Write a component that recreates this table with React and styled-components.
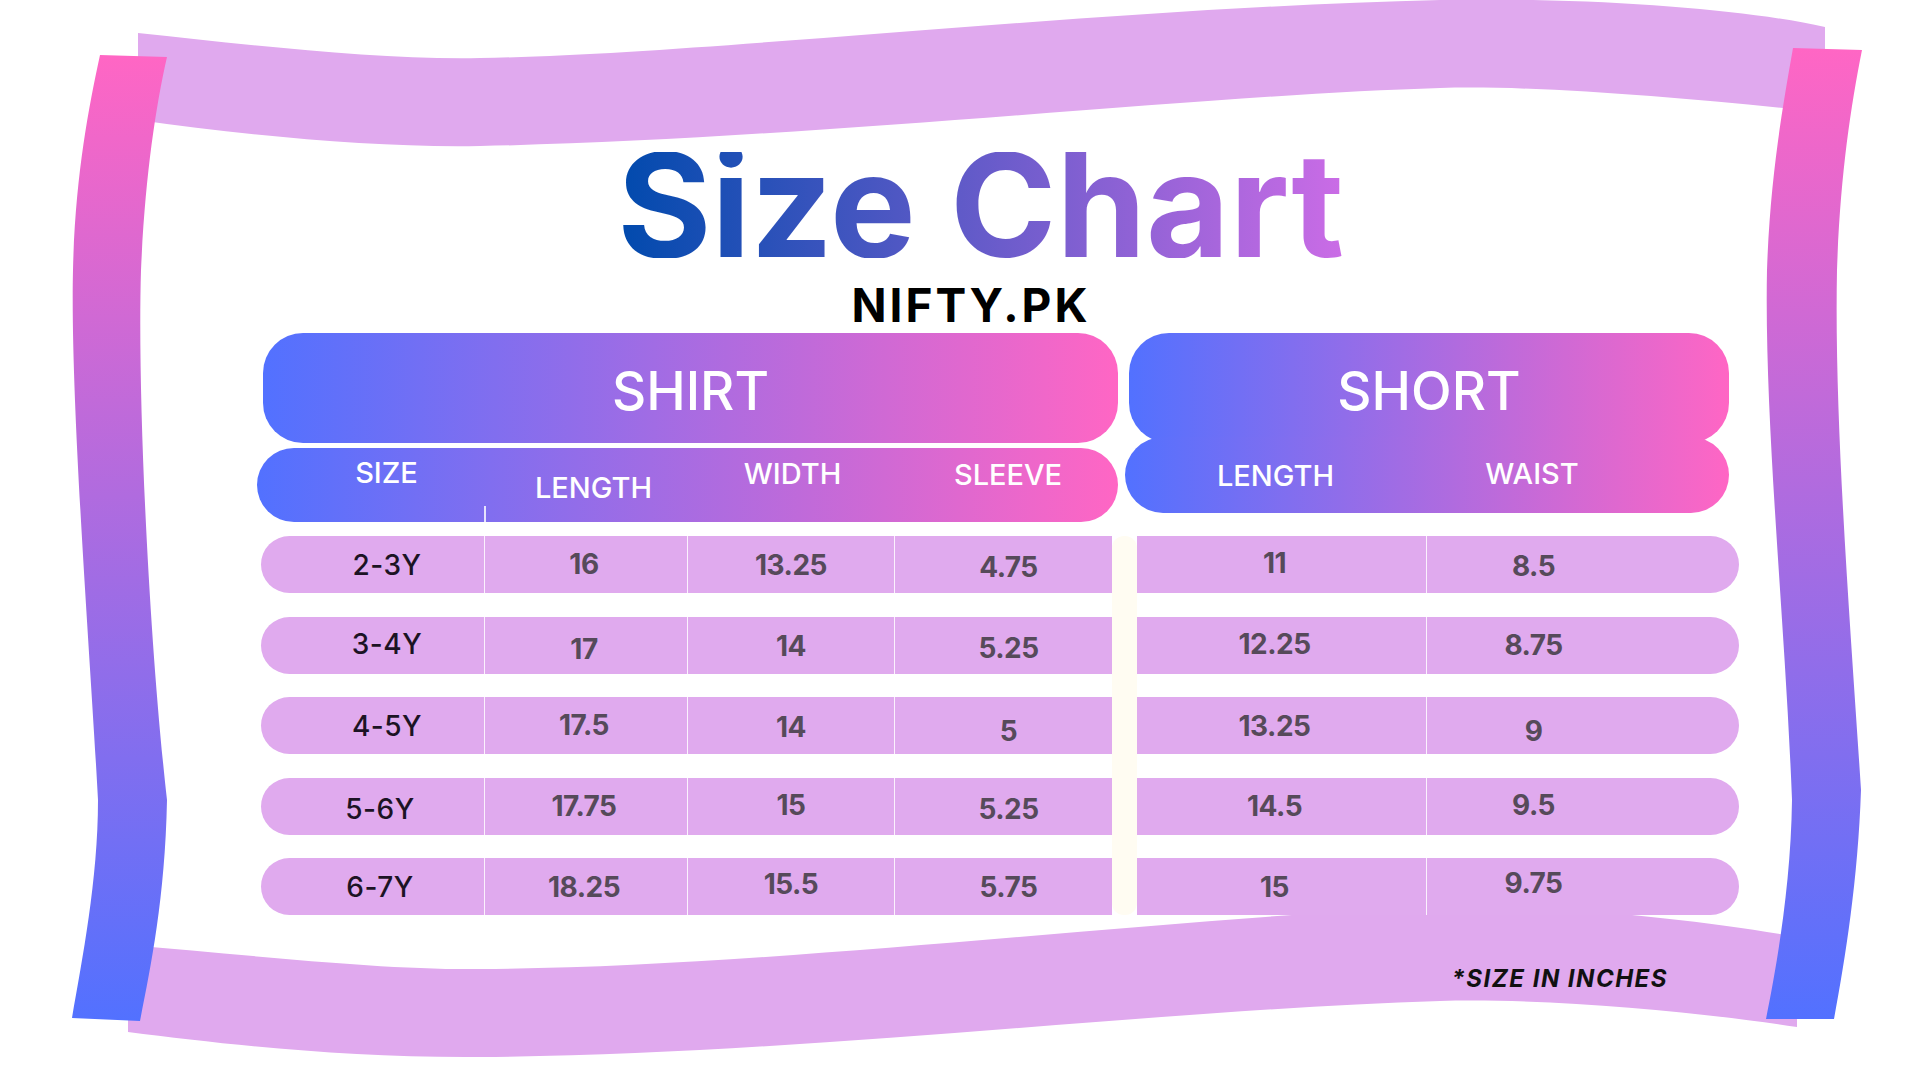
import React from "react"
import styled, { createGlobalStyle } from "styled-components"

const BLUE = "#5271ff"
const PINK = "#ff66c4"
const LILAC = "#e0a9ee"
const ROW = "#e0aaee"

const GlobalStyle = createGlobalStyle`
  html, body {
    margin: 0;
    padding: 0;
    background: #fff;
  }
  body {
    font-family: Inter, "Noto Sans", sans-serif;
  }
`

const c = (v, dy = 0, dx = 0) => ({ v, dy, dx })

const shirtRows = [
  [c("2-3Y"), c("16", -1.5), c("13.25"), c("4.75", 2)],
  [c("3-4Y", -1.5), c("17", 3.5), c("14", 1), c("5.25", 2.5)],
  [c("4-5Y"), c("17.5", -1), c("14", 1), c("5", 5)],
  [c("5-6Y", 3, -7), c("17.75"), c("15", -1), c("5.25", 3)],
  [c("6-7Y", 0, -7), c("18.25"), c("15.5", -3), c("5.75")],
]

const shortRows = [
  [c("11", -2.5), c("8.5", 0.5)],
  [c("12.25", -1.5), c("8.75")],
  [c("13.25"), c("9", 5)],
  [c("14.5"), c("9.5", -1)],
  [c("15"), c("9.75", -4)],
]

// padding per column so the text sits where the poster puts it
const shirtCols = [{ pl: 29 }, { pr: 4 }, {}, { pl: 10 }]
const shortCols = [{ pr: 14 }, { pr: 99 }]

const shirtLabels = [
  { t: "SIZE", pl: 32, dy: -13 },
  { t: "LENGTH", pl: 16, dy: 2, tick: true },
  { t: "WIDTH", pl: 4, dy: -12 },
  { t: "SLEEVE", pl: 4, dy: -11 },
]
const shortLabels = [
  { t: "LENGTH", dy: 0 },
  { t: "WAIST", pr: 91, dy: -2 },
]

const Frame = () => (
  <Backdrop viewBox="0 0 1920 1080" preserveAspectRatio="none">
    <defs>
      <linearGradient id="bar" x1="0" y1="0" x2="0" y2="1">
        <stop offset="0" stopColor={PINK} />
        <stop offset="1" stopColor={BLUE} />
      </linearGradient>
    </defs>
    <path
      fill={LILAC}
      d="M138,33 C250,45 380,60 480,58 C700,55 1100,8 1440,0 C1600,-3 1750,10 1825,27 L1825,112 C1700,100 1550,85 1440,88 C1200,95 800,140 480,146 C380,148 250,136 138,120 Z"
    />
    <path
      fill={LILAC}
      d="M128,945 C250,955 380,970 480,969 C750,968 1100,925 1400,908 C1550,902 1700,920 1797,937 L1797,1027 C1700,1012 1550,998 1440,1001 C1150,1010 800,1055 480,1057 C350,1058 230,1045 128,1032 Z"
    />
    <path
      fill="url(#bar)"
      d="M100,55 L167,57 C155,110 145,180 141,270 C137,400 150,650 167,800 C165,900 150,970 140,1021 L72,1018 C82,960 98,880 98,800 C90,650 70,400 73,270 C75,180 88,110 100,55 Z"
    />
    <path
      fill="url(#bar)"
      d="M1793,48 L1862,50 C1850,110 1840,180 1837,270 C1834,420 1850,620 1861,790 C1858,880 1845,960 1834,1019 L1766,1019 C1778,960 1791,880 1792,800 C1785,620 1764,420 1767,270 C1770,180 1782,110 1793,48 Z"
    />
  </Backdrop>
)

const App = () => (
  <Canvas>
    <GlobalStyle />
    <Frame />
    <Content>
      <Title>Size Chart</Title>
      <Brand>NIFTY.PK</Brand>

      <HeadRow>
        <Block $w={861}>
          <Banner $inset={6}>SHIRT</Banner>
          <SubBar $h={74} $mt={5} $cols="227px 203px 207px 224px">
            {shirtLabels.map((l) => (
              <Label key={l.t} $pl={l.pl} $pr={l.pr} $tick={l.tick}>
                <Shift $dy={l.dy}>{l.t}</Shift>
              </Label>
            ))}
          </SubBar>
        </Block>
        <Block $w={604}>
          <Banner $inset={4}>SHORT</Banner>
          <SubBar $h={76} $mt={-6} $cols="301px 303px">
            {shortLabels.map((l) => (
              <Label key={l.t} $pl={l.pl} $pr={l.pr}>
                <Shift $dy={l.dy}>{l.t}</Shift>
              </Label>
            ))}
          </SubBar>
        </Block>
      </HeadRow>

      <Table>
        <Spine />
        {shirtRows.map((row, i) => (
          <React.Fragment key={i}>
            <ShirtPart $row={i + 1}>
              {row.map((cell, j) => (
                <Cell key={j} $pl={shirtCols[j].pl} $pr={shirtCols[j].pr}>
                  <Value $size={j === 0} $dy={cell.dy} $dx={cell.dx}>
                    {cell.v}
                  </Value>
                </Cell>
              ))}
            </ShirtPart>
            <ShortPart $row={i + 1}>
              {shortRows[i].map((cell, j) => (
                <Cell key={j} $pl={shortCols[j].pl} $pr={shortCols[j].pr}>
                  <Value $dy={cell.dy} $dx={cell.dx}>
                    {cell.v}
                  </Value>
                </Cell>
              ))}
            </ShortPart>
          </React.Fragment>
        ))}
      </Table>

      <Footnote>*SIZE IN INCHES</Footnote>
    </Content>
  </Canvas>
)

const Canvas = styled.div`
  position: relative;
  width: 1920px;
  height: 1080px;
  overflow: hidden;
  background: #fff;
`

const Backdrop = styled.svg`
  position: absolute;
  inset: 0;
  width: 100%;
  height: 100%;
`

const Content = styled.div`
  position: relative;
  display: flex;
  flex-direction: column;
  padding-top: 152px;
`

const Title = styled.h1`
  align-self: center;
  height: 106px;
  margin: 0 0 0 41px;
  font: 700 144px/106px Inter, "Noto Sans", sans-serif;
  background: linear-gradient(90deg, #004aad 0%, #cb6ce6 100%);
  -webkit-background-clip: text;
  background-clip: text;
  color: transparent;
  overflow: visible;
`

const Brand = styled.div`
  align-self: center;
  margin: 30px 0 0 22px;
  font: 700 46px/34px Inter, "Noto Sans", sans-serif;
  letter-spacing: 3px;
  color: #000;
`

const HeadRow = styled.div`
  display: flex;
  align-items: flex-start;
  gap: 7px;
  padding-left: 257px;
  margin-top: 11px;
`

const Block = styled.div`
  display: flex;
  flex-direction: column;
  width: ${(p) => p.$w}px;
`

const Banner = styled.div`
  height: 110px;
  margin-left: ${(p) => p.$inset}px;
  padding-top: 7px;
  box-sizing: border-box;
  border-radius: 40px;
  background: linear-gradient(90deg, ${BLUE}, ${PINK});
  display: flex;
  align-items: center;
  justify-content: center;
  color: #fff;
  font: 500 53px/1 Inter, "Noto Sans", sans-serif;
`

const SubBar = styled.div`
  position: relative;
  height: ${(p) => p.$h}px;
  margin-top: ${(p) => p.$mt}px;
  border-radius: ${(p) => p.$h / 2}px;
  background: linear-gradient(90deg, ${BLUE}, ${PINK});
  display: grid;
  grid-template-columns: ${(p) => p.$cols};
`

const Label = styled.div`
  position: relative;
  display: flex;
  align-items: center;
  justify-content: center;
  padding-left: ${(p) => p.$pl || 0}px;
  padding-right: ${(p) => p.$pr || 0}px;
  color: #fff;
  font: 500 29px/1 Inter, "Noto Sans", sans-serif;

  ${(p) =>
    p.$tick &&
    `
    &::before {
      content: "";
      position: absolute;
      left: 0;
      bottom: 0;
      width: 1.5px;
      height: 16px;
      background: rgba(255, 255, 255, 0.8);
    }
  `}
`

const Shift = styled.span`
  transform: translateY(${(p) => p.$dy || 0}px);
`

const Table = styled.div`
  display: grid;
  grid-template-columns: 851px 25px 602px;
  grid-auto-rows: 57px;
  row-gap: 23.5px;
  padding-left: 261px;
  margin-top: 14px;
`

const Spine = styled.div`
  grid-column: 2;
  grid-row: 1 / span 5;
  background: #fffcf2;
  border-radius: 12px;
`

const ShirtPart = styled.div`
  grid-column: 1;
  grid-row: ${(p) => p.$row};
  display: grid;
  grid-template-columns: 223px 203px 207px 218px;
  background: ${ROW};
  border-radius: 28.5px 0 0 28.5px;
`

const ShortPart = styled.div`
  grid-column: 3;
  grid-row: ${(p) => p.$row};
  display: grid;
  grid-template-columns: 289px 313px;
  background: ${ROW};
  border-radius: 0 28.5px 28.5px 0;
`

const Cell = styled.div`
  display: flex;
  align-items: center;
  justify-content: center;
  padding-left: ${(p) => p.$pl || 0}px;
  padding-right: ${(p) => p.$pr || 0}px;

  & + & {
    border-left: 1.5px solid rgba(255, 255, 255, 0.85);
  }
`

const Value = styled.span`
  font: ${(p) => (p.$size ? 500 : 700)} 28px/1 Inter, "Noto Sans", sans-serif;
  color: ${(p) => (p.$size ? "#1c1324" : "#564a5a")};
  letter-spacing: ${(p) => (p.$size ? "0.5px" : "-0.5px")};
  transform: translate(${(p) => p.$dx || 0}px, ${(p) => p.$dy || 0}px);
`

const Footnote = styled.div`
  align-self: flex-end;
  margin: 52px 252px 0 0;
  font: italic 700 24px/1 Inter, "Noto Sans", sans-serif;
  letter-spacing: 1.5px;
  color: #111;
`

export default App
